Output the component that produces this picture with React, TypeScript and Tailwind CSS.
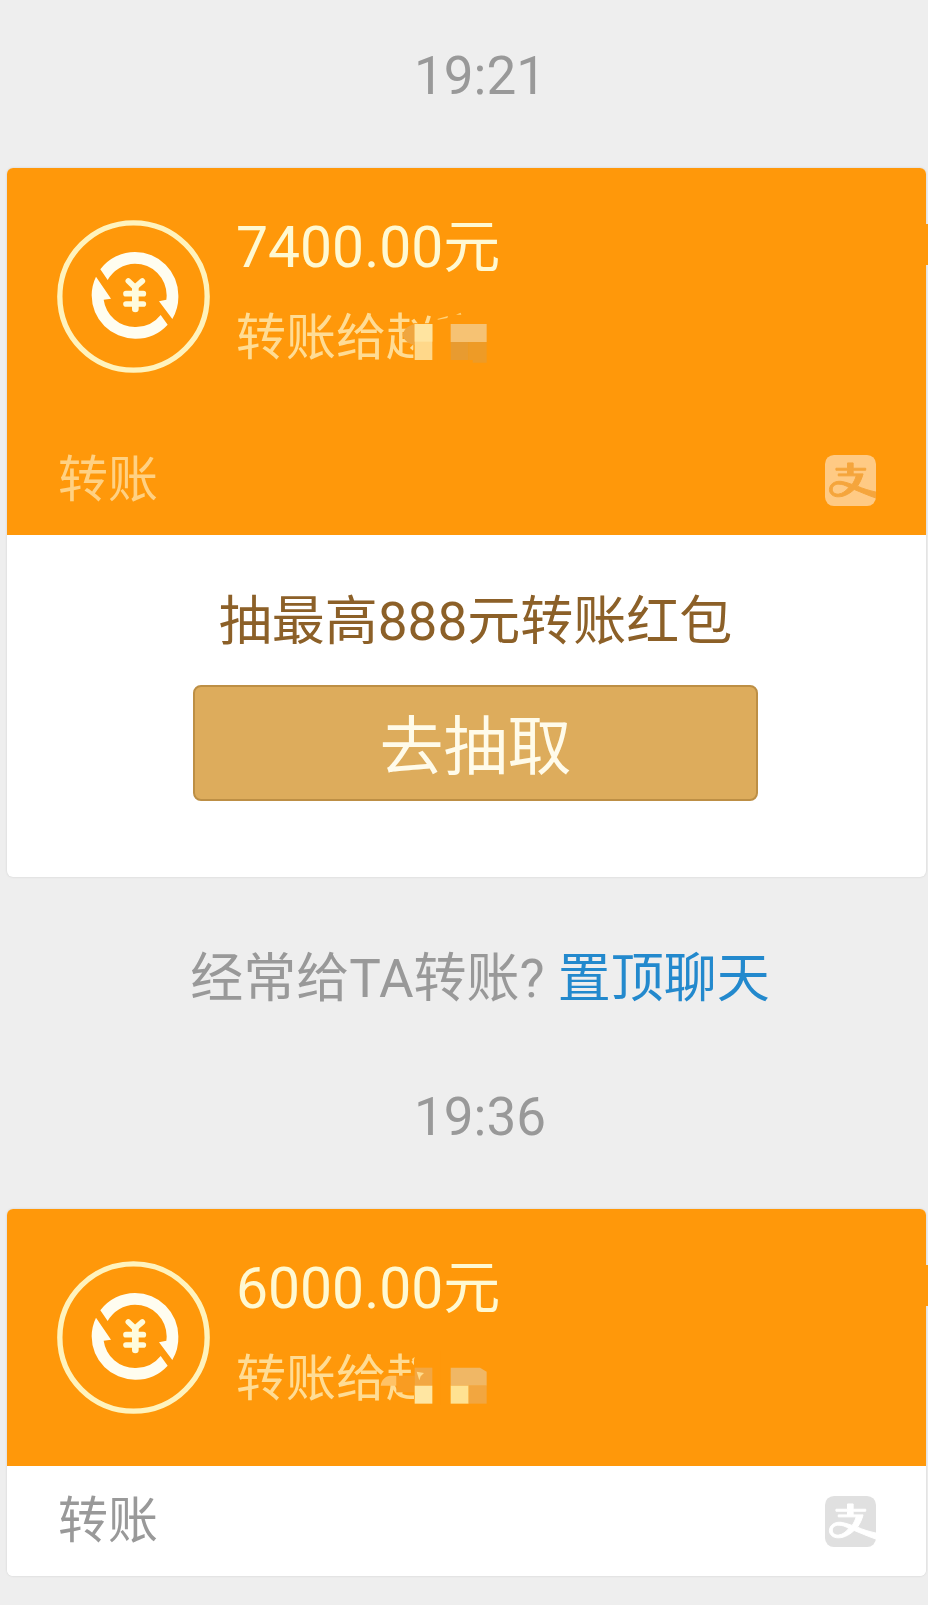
import type { ReactNode } from "react";

function TransferIcon() {
    return (
        <svg className="h-[153px] w-[153px] shrink-0" viewBox="51 60 459 459" aria-hidden="true">
            <circle cx="280.5" cy="289.5" r="221" fill="none" stroke="#fff3bd" strokeWidth="16" />
            <g fill="#fffdf0">
                {/* Upper arrow */}
                <path d="M181 208A130 130 0 0 1 285 156A130 130 0 0 1 415 286A130 130 0 0 1 397 357L357 304L379 299A95 95 0 0 0 380 286A95 95 0 0 0 285 191A95 95 0 0 0 203 240Z" />
                {/* Lower arrow */}
                <path d="M168 230L213 296L191 299A95 95 0 0 0 285 381A95 95 0 0 0 362 345L383 374A130 130 0 0 1 285 416A130 130 0 0 1 155 286A130 130 0 0 1 168 230Z" />
            </g>
            <g fill="none" stroke="#fffbdc" strokeWidth="17" strokeLinecap="round">
                <path d="M265 243L285 262L307 243" strokeLinejoin="round" />
                <path d="M286 262V327" strokeWidth="20" />
                <path d="M258 281H310M258 312H310" />
            </g>
        </svg>
    );
}

function AlipayIcon({ bg, fg }: { bg: string; fg: string }) {
    return (
        <svg className="h-[51px] w-[51px]" viewBox="72 72 154 154" role="img" aria-label="Alipay">
            <rect x="72" y="72" width="154" height="154" rx="27" fill={bg} />
            <g fill={fg} stroke={fg} strokeWidth="3" strokeLinejoin="round">
                <path d="M140 96H157V112H195V118H157V129H140V118H105V112H140Z" />
                <path d="M112 129H187C183 144 177 156 170 166C187 174 205 179 226 184V202C202 194 180 184 160 176C143 192 124 200 107 198C91 196 83 184 86 171C90 156 106 149 124 152C134 154 144 157 154 161C159 153 164 144 166 135H112ZM144 170C133 163 123 160 114 160C102 160 94 166 94 175C94 185 102 191 113 190C124 189 135 181 144 170Z" />
            </g>
        </svg>
    );
}

// Pixelated patches that hide the rest of the payee's name
function FirstMosaic() {
    return (
        <svg className="absolute top-1 left-[148px] h-[54px] w-[107px]" viewBox="490 330 321 162" aria-hidden="true">
            <path d="M578 370H650V492H610V474L578 474Z" fill="#ff980a" />
            <path d="M582 372C560 378 550 388 546 404C550 420 560 430 582 435Z" fill="#efa640" />
            <path d="M582 372H635V480H582Z" fill="#ffd88a" />
            <path d="M582 372H635V425H582Z" fill="#ffe4a0" />
            <path d="M650 357L682 348L680 354L652 359ZM706 344L720 338L722 344Z" fill="#ffd27a" />
            <path d="M690 372H798V426H690Z" fill="#f6c273" />
            <path d="M690 426H744V480H690Z" fill="#e89b30" />
            <path d="M744 426H798V488H756V480H744Z" fill="#ee9b26" />
        </svg>
    );
}

function SecondMosaic() {
    return (
        <svg className="absolute top-1 left-[141px] h-[54px] w-[114px]" viewBox="469 334 342 162" aria-hidden="true">
            <path d="M580 334H660V496H580Z" fill="#ff980a" />
            <path d="M574 358L582 352L578 370Z" fill="#ffd88a" />
            <path d="M527 408H582V458H527Z" fill="#f99c22" />
            <path d="M480 438C482 420 494 409 510 408H527V438Z" fill="#ffc266" />
            <path d="M582 384H635V438H582Z" fill="#f2a743" />
            <path d="M588 396L610 400L600 410L596 422Z" fill="#ffdb8c" />
            <path d="M582 438H635V492H582Z" fill="#ffe6a2" />
            <path d="M690 384H778L798 396V438H690Z" fill="#f0b765" />
            <path d="M690 438H744V492H690Z" fill="#ffe292" />
            <path d="M744 438H798V492H744Z" fill="#f2a640" />
        </svg>
    );
}

function Timestamp({ children }: { children: ReactNode }) {
    return <time className="block pl-8 text-center text-[53px] leading-[64px] text-[#999999]">{children}</time>;
}

interface TransferCardProps {
    amount: string;
    payee: string;
    mosaic: ReactNode;
    plainFooter?: boolean;
    children?: ReactNode;
}

function TransferCard({ amount, payee, mosaic, plainFooter, children }: TransferCardProps) {
    return (
        <article className="relative mt-[60px] mr-0.5 ml-[7px]">
            {/* Bubble tail */}
            <span className="absolute top-14 -right-0.5 h-[41px] w-1 bg-[#ff980a]" />
            <div className="overflow-hidden rounded-md bg-white shadow-[0_0_2px_#c8c8c8]">
                <div className="flex gap-[26px] bg-[#ff980a] px-[50px] pt-[52px] pb-[52px]">
                    <TransferIcon />
                    <div className="flex flex-col">
                        <h2 className="-mt-1 text-[57px] leading-[64px] text-[#fff9d2]">{amount}</h2>
                        <p className="relative mt-[26px] text-[50px] leading-[64px] text-[#ffdc94]">
                            {payee}
                            {mosaic}
                        </p>
                    </div>
                </div>
                <div
                    className={`flex h-[110px] items-center justify-between pr-[50px] pl-[51px] text-[50px] leading-[64px] ${
                        plainFooter ? "bg-white text-[#999999]" : "bg-[#ff980a] text-[#ffd183]"
                    }`}
                >
                    <span>转账</span>
                    {plainFooter ? <AlipayIcon bg="#e0e0e0" fg="#ffffff" /> : <AlipayIcon bg="#ffca84" fg="#f5a53c" />}
                </div>
                {children}
            </div>
        </article>
    );
}

export default function App() {
    return (
        <main className="min-h-screen w-full overflow-hidden bg-[#eeeeee] pt-11 pb-[29px] font-[Roboto,'Noto_Sans_CJK_SC',sans-serif]">
            <Timestamp>19:21</Timestamp>

            <TransferCard amount="7400.00元" payee="转账给赵" mosaic={<FirstMosaic />}>
                <div className="flex flex-col items-center pt-[55px] pb-[76px] pl-[18px]">
                    <h3 className="text-[53px] leading-[64px] text-[#8c6028]">抽最高888元转账红包</h3>
                    <button
                        type="button"
                        className="mt-[31px] h-[116px] w-[565px] rounded-lg border-2 border-[#bd8f45] bg-[#ddac5c] pt-2.5 text-[64px] leading-[80px] text-[#fffbea]"
                    >
                        去抽取
                    </button>
                </div>
            </TransferCard>

            <p className="pt-[70px] pb-[74px] pl-8 text-center text-[53px] leading-[64px] text-[#999999]">
                经常给TA转账?{" "}
                <a href="#pin" className="text-[#2389cd]">
                    置顶聊天
                </a>
            </p>

            <Timestamp>19:36</Timestamp>

            <TransferCard amount="6000.00元" payee="转账给赵" mosaic={<SecondMosaic />} plainFooter />
        </main>
    );
}
